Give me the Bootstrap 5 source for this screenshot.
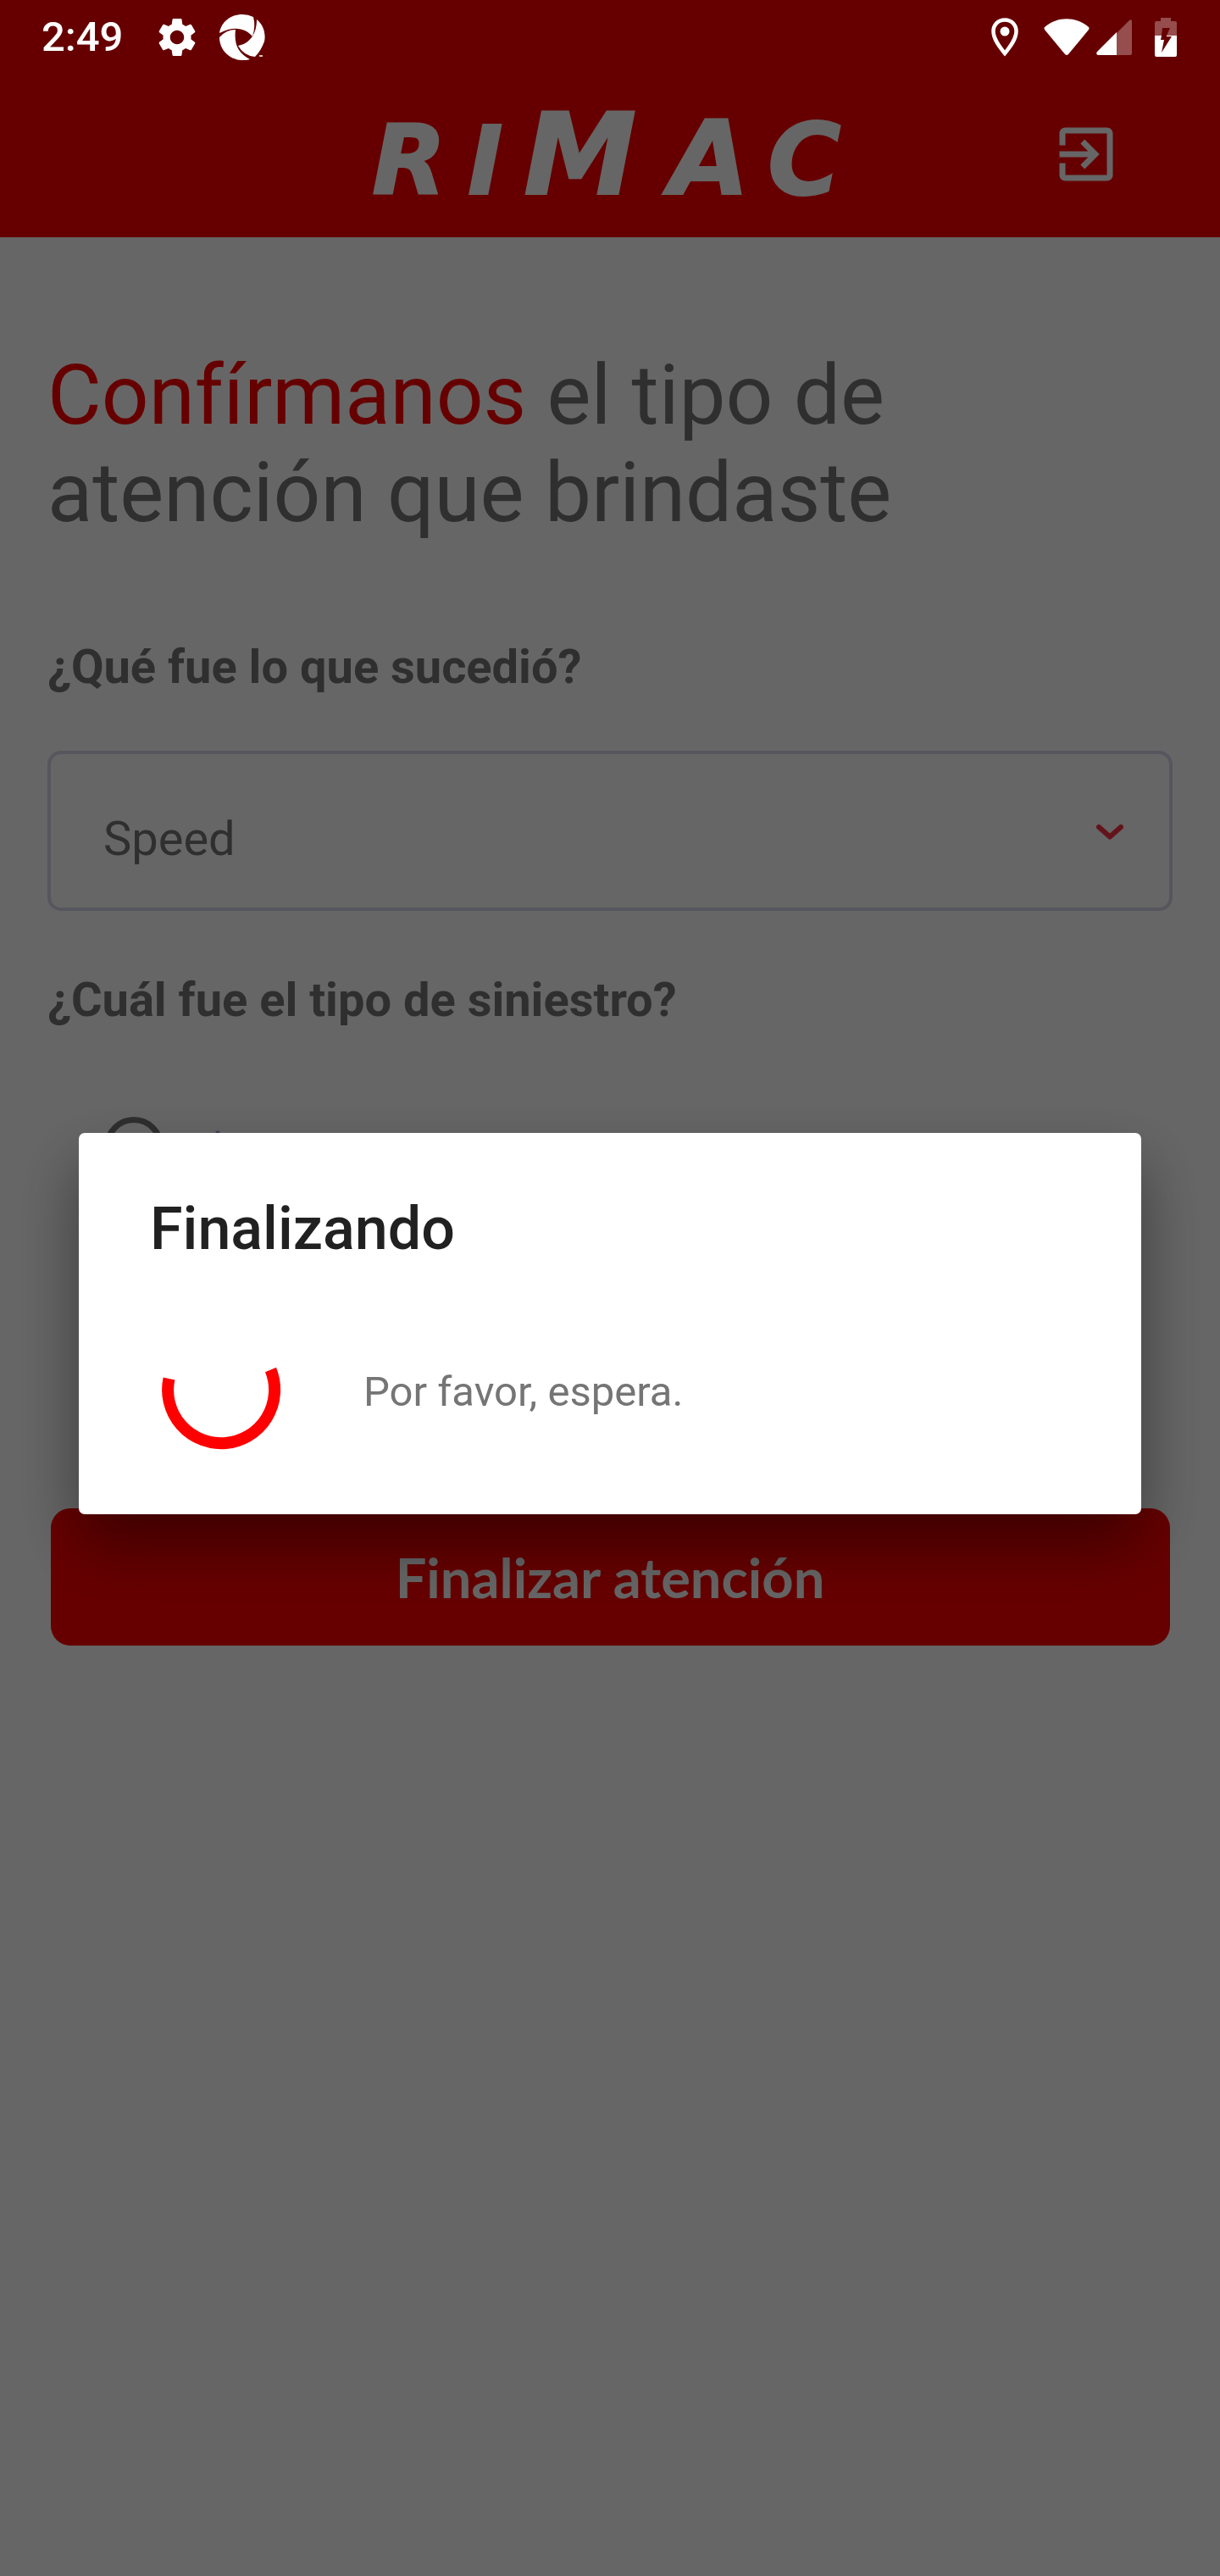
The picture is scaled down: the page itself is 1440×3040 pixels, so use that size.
<!DOCTYPE html>
<html lang="es">
<head>
<meta charset="utf-8">
<meta name="viewport" content="width=device-width, initial-scale=1">
<title>RIMAC - Finalizar atención</title>
<link href="https://cdn.jsdelivr.net/npm/bootstrap@5.3.0/dist/css/bootstrap.min.css" rel="stylesheet">
<style>
  body { font-family: Roboto, "Noto Sans", sans-serif; color: #757575; background: #fff; }
  .statusbar { z-index: 1060; height: 86px; padding: 2px 51px 0 49px; color: #fff; font-size: 49px; font-weight: 500; }
  .icon-gear { margin-left: 42px; }
  .icon-swirl { margin-left: 28px; }
  .icon-wifi { margin-left: 30px; }
  .icon-signal { margin-left: 8px; }
  .icon-battery { margin-left: 27px; }
  .app-header { background: #f00; padding-top: 84px; height: 280px; }
  .exit-btn { right: 116px; top: 140px; color: #fff; line-height: 0; }
  .logo-text { font-family: "DejaVu Sans", sans-serif; font-weight: 700; font-style: italic; fill: #fff; stroke: #fff; stroke-width: 2; }
  .app-main { padding: 129px 56px 60px; }
  .app-title { font-size: 98px; line-height: 115px; font-weight: 400; margin-bottom: 115px; }
  .app-title span { color: #f00; }
  .field-label { font-size: 56px; line-height: 66px; font-weight: 700; }
  .label-first { margin-bottom: 66px; }
  .label-second { margin: 72px 0 105px; }
  .field-select {
    height: 189px; padding: 18px 160px 0 62px; font-size: 56px; color: #757575;
    border: 4px solid #d7d7eb; border-radius: 16px;
    background-image: url("data:image/svg+xml,%3Csvg xmlns='http://www.w3.org/2000/svg' viewBox='0 0 32 18'%3E%3Cpath d='M3 3l13 11.500L29 3' fill='none' stroke='%23f83244' stroke-width='6' stroke-linecap='round' stroke-linejoin='round'/%3E%3C/svg%3E");
    background-size: 32px 18px; background-position: right 54px top 83px;
  }
  .option-row { padding-left: 67px; gap: 26px; margin-bottom: 392px; height: 70px; }
  .option-row .form-check-input { width: 70px; height: 70px; border: 7px solid #757575; }
  .option-row label { font-size: 49px; padding-top: 4px; color: #aa8fe0; }
  .finish-btn {
    display: block; width: calc(100% - 7px); margin: 0 auto; height: 162px; border: 0; border-radius: 23px;
    background: #f00; color: #fff; font: 700 65px/76px Lato, sans-serif;
  }
  .scrim { --bs-backdrop-opacity: .6; }
  .wait-modal { padding-top: 84px; }
  .wait-modal .modal-dialog { max-width: none; margin: 0 93px; min-height: 100%; }
  .wait-modal .modal-content {
    border: 0; border-radius: 7px; padding: 72px 84px 63px; background: #fff;
    box-shadow: 0 36px 76px rgba(0, 0, 0, .42);
  }
  .wait-title { font-size: 70px; line-height: 82px; font-weight: 500; color: #212121; margin-bottom: 65px; }
  .wait-row { gap: 84px; font-size: 49px; color: #757575; }
  .wait-row span { padding-top: 5px; }
</style>
<script src="https://cdn.jsdelivr.net/npm/bootstrap@5.3.0/dist/js/bootstrap.bundle.min.js"></script>
</head>
<body class="min-vh-100">

<div class="statusbar fixed-top d-flex align-items-center justify-content-between">
  <div class="d-flex align-items-center">
    <span>2:49</span>
    <svg class="icon-gear" width="44" height="46" viewBox="2.4 2 19.200 20" fill="#fff" aria-hidden="true"><path d="M19.140 12.940c.04-.3.06-.61.06-.94 0-.32-.02-.64-.07-.94l2.030-1.580c.18-.14.23-.41.12-.61l-1.920-3.320c-.12-.22-.37-.29-.59-.22l-2.390.96c-.5-.38-1.030-.7-1.620-.94l-.36-2.540c-.04-.24-.24-.41-.48-.41h-3.840c-.24 0-.43.17-.47.41l-.36 2.540c-.59.24-1.130.57-1.620.94l-2.390-.96c-.22-.08-.47 0-.59.22L2.740 8.870c-.12.21-.08.47.12.61l2.030 1.580c-.05.3-.09.63-.09.94s.02.64.07.94l-2.030 1.580c-.18.14-.23.41-.12.61l1.920 3.320c.12.22.37.29.59.22l2.390-.96c.5.38 1.030.7 1.620.94l.36 2.540c.05.24.24.41.48.41h3.840c.24 0 .44-.17.47-.41l.36-2.540c.59-.24 1.130-.56 1.620-.94l2.390.96c.22.08.47 0 .59-.22l1.920-3.320c.12-.22.07-.47-.12-.61l-2.010-1.580zM12 15.600c-1.980 0-3.600-1.620-3.600-3.600s1.620-3.600 3.600-3.600 3.600 1.620 3.600 3.600-1.620 3.600-3.600 3.600z"/></svg>
    <svg class="icon-swirl" width="54" height="54" viewBox="0 0 54 54" aria-hidden="true">
      <g fill="#fff">
        <path d="M0 22C2 9 13 0 27 0q7 0 13 3q3 11-1 23C31 16 17 13 0 22Z"/>
        <path d="M44 6C52 12 55 23 53 32q-4 11-11 18q-13-1-20-13C37 34 44 22 44 6Z"/>
        <path d="M0 27q8-9 19-9C17 35 22 46 36 53C17 58 0 45 0 27Z"/>
      </g>
      <path d="M47 49h4" stroke="#fff" stroke-width="1.500"/>
    </svg>
  </div>
  <div class="d-flex align-items-center">
    <svg width="32" height="46" viewBox="0 0 32 46" aria-hidden="true"><path d="M16 2.500C8 2.500 2.500 8.500 2.500 16c0 9 7 18 13.500 26C22.500 34 29.500 25 29.500 16 29.500 8.500 24 2.500 16 2.500Z" fill="none" stroke="#fff" stroke-width="4.500"/><circle cx="16" cy="16" r="5.500" fill="#fff"/></svg>
    <svg class="icon-wifi" width="54" height="44" viewBox="0 0 54 44" fill="#fff" aria-hidden="true"><path d="M1 10C16-3 38-3 53 10q1 1 0 3L29 42q-2 2-4 0L1 13q-1-2 0-3Z"/></svg>
    <svg class="icon-signal" width="42" height="42" viewBox="0 0 42 42" fill="#fff" aria-hidden="true"><path d="M24 16V42H40q2 0 2-2V2q0-3-3-1Z" opacity=".3"/><path d="M24 15V42H2q-3-1-1-4Z"/></svg>
    <svg class="icon-battery" width="26" height="46" viewBox="0 0 26 46" fill="#fff" aria-hidden="true"><path d="M7 0H19V4H24q2 0 2 2V21H14L18 12H9L8 21H0V6q0-2 2-2H7Z" opacity=".3"/><path d="M0 21H8L7 26H11L8 41 20 22H14V21H26V44q0 2-2 2H2q-2 0-2-2Z"/></svg>
  </div>
</div>

<header class="app-header d-flex align-items-center justify-content-center">
  <svg width="580" height="188" viewBox="0 0 580 188" role="img" aria-label="RIMAC">
    <text class="logo-text" y="141"><tspan font-size="114" x="9">R</tspan><tspan font-size="112" x="122">I</tspan><tspan font-size="134" x="188">M</tspan><tspan font-size="122" x="360">A</tspan><tspan font-size="118" x="476">C</tspan></text>
  </svg>
  <button type="button" class="exit-btn btn p-0 border-0 position-absolute" aria-label="Salir">
    <svg width="84" height="84" viewBox="0 0 24 24" fill="#fff"><path d="M10.090 15.590 11.500 17l5-5-5-5-1.410 1.410L12.670 11H3v2h9.670l-2.580 2.590zM19 3H5c-1.110 0-2 .9-2 2v4h2V5h14v14H5v-4H3v4c0 1.100.89 2 2 2h14c1.100 0 2-.9 2-2V5c0-1.100-.9-2-2-2z"/></svg>
  </button>
</header>

<main class="app-main">
  <h1 class="app-title"><span>Confírmanos</span> el tipo de<br>atención que brindaste</h1>
  <form>
    <label for="what" class="field-label label-first d-block">¿Qué fue lo que sucedió?</label>
    <select id="what" class="form-select field-select"><option>Speed</option></select>
    <div class="field-label label-second">¿Cuál fue el tipo de siniestro?</div>
    <div class="option-row d-flex align-items-center">
      <input class="form-check-input m-0 flex-shrink-0" type="radio" name="kind" id="kind1">
      <label for="kind1">Al</label>
    </div>
    <button type="button" class="finish-btn">Finalizar atención</button>
  </form>
</main>

<div class="modal-backdrop show scrim"></div>
<div class="modal wait-modal d-block" role="dialog" aria-modal="true" aria-labelledby="waitTitle">
  <div class="modal-dialog modal-dialog-centered">
    <div class="modal-content">
      <h2 class="wait-title" id="waitTitle">Finalizando</h2>
      <div class="wait-row d-flex align-items-center">
        <svg width="168" height="168" viewBox="-84 -84 168 168" role="img" aria-label="Cargando"><path d="M-61.500-13A63 63 0 1 0 58.500-23.500" fill="none" stroke="#f00" stroke-width="14"/></svg>
        <span>Por favor, espera.</span>
      </div>
    </div>
  </div>
</div>

</body>
</html>
